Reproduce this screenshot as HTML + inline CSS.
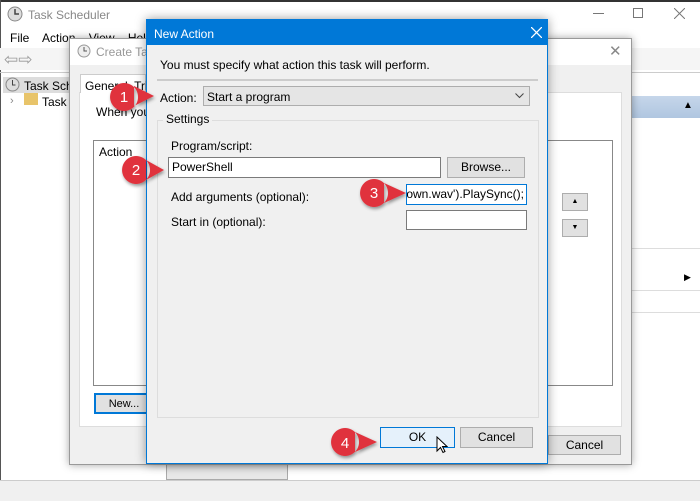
<!DOCTYPE html>
<html><head><meta charset="utf-8"><style>
*{box-sizing:border-box;margin:0;padding:0}
body{width:700px;height:501px;overflow:hidden;position:relative;background:#fff;font-family:"Liberation Sans",sans-serif;font-size:11px;color:#000}
.a{position:absolute}
.btn{position:absolute;background:#e1e1e1;border:1px solid #adadad;text-align:center;line-height:18px;font-size:11px}
.inp{position:absolute;background:#fff;border:1px solid #7a7a7a;font-size:11px;padding-left:3px;line-height:18px}
</style></head><body>
<!-- main window -->
<div class="a" style="left:0;top:0;width:700px;height:2px;background:#333"></div>
<div class="a" style="left:0;top:0;width:1px;height:501px;background:#555"></div>
<svg class="a" style="left:7px;top:6px" width="16" height="16"><circle cx="8" cy="8" r="7" fill="#ddd" stroke="#888"/><path d="M8 3v5h4" stroke="#444" fill="none" stroke-width="1.5"/></svg>
<div class="a" style="left:28px;top:8px;color:#888;font-size:12px">Task Scheduler</div>
<div class="a" style="left:593px;top:13px;width:11px;height:1px;background:#777"></div>
<div class="a" style="left:633px;top:8px;width:10px;height:10px;border:1px solid #777"></div>
<svg class="a" style="left:674px;top:8px" width="11" height="11"><path d="M0 0L11 11M11 0L0 11" stroke="#777"/></svg>
<div class="a" style="left:10px;top:31px;font-size:12px">File&nbsp;&nbsp;&nbsp; Action&nbsp;&nbsp;&nbsp; View&nbsp;&nbsp;&nbsp; Help</div>
<div class="a" style="left:0;top:48px;width:700px;height:22px;background:#f5f5f5"></div>
<div class="a" style="left:4px;top:50px;color:#999;font-size:17px">⇦⇨</div>
<div class="a" style="left:0;top:72px;width:700px;height:1px;background:#ccc"></div>
<div class="a" style="left:3px;top:77px;width:66px;height:16px;background:#ddd"></div>
<svg class="a" style="left:5px;top:77px" width="15" height="15"><circle cx="7.5" cy="7.5" r="6.5" fill="#ddd" stroke="#888"/><path d="M7.5 3v5h3" stroke="#444" fill="none"/></svg>
<div class="a" style="left:24px;top:79px;font-size:12px">Task Sche</div>
<div class="a" style="left:10px;top:95px;color:#888">›</div>
<div class="a" style="left:24px;top:93px;width:14px;height:12px;background:#e8c46a"></div>
<div class="a" style="left:42px;top:95px;font-size:12px">Task S</div>
<div class="a" style="left:632px;top:96px;width:68px;height:22px;background:linear-gradient(#c6d6ea,#b0c6e0)"></div>
<div class="a" style="left:683px;top:100px;font-size:10px">▲</div>
<div class="a" style="left:632px;top:248px;width:68px;height:1px;background:#ddd"></div>
<div class="a" style="left:632px;top:290px;width:68px;height:1px;background:#ddd"></div>
<div class="a" style="left:632px;top:312px;width:68px;height:1px;background:#ddd"></div>
<div class="a" style="left:684px;top:272px;font-size:9px">▶</div>
<div class="a" style="left:0;top:480px;width:700px;height:21px;background:#f0f0f0;border-top:1px solid #ccc"></div>
<div class="a" style="left:166px;top:462px;width:122px;height:18px;background:#e8e8e8;border:1px solid #aaa"></div>
<!-- Create Task dialog -->
<div class="a" style="left:69px;top:38px;width:563px;height:427px;background:#f0f0f0;border:1px solid #999;box-shadow:0 0 8px rgba(0,0,0,.35)"></div>
<div class="a" style="left:70px;top:39px;width:561px;height:26px;background:#fff"></div>
<svg class="a" style="left:77px;top:44px" width="14" height="14"><circle cx="7" cy="7" r="6" fill="#eee" stroke="#999"/><path d="M7 3v4h3" stroke="#555" fill="none"/></svg>
<div class="a" style="left:96px;top:45px;color:#999;font-size:12px">Create Task</div>
<div class="a" style="left:609px;top:42px;color:#888;font-size:15px">✕</div>
<div class="a" style="left:79px;top:92px;width:543px;height:335px;background:#fff;border:1px solid #ddd"></div>
<div class="a" style="left:80px;top:74px;width:66px;height:19px;background:#fff;border:1px solid #ccc;border-bottom:none"></div>
<div class="a" style="left:85px;top:79px;font-size:12px">General&nbsp; Trig</div>
<div class="a" style="left:96px;top:105px;font-size:12px">When you</div>
<div class="a" style="left:93px;top:140px;width:520px;height:246px;border:1px solid #888;background:#fff"></div>
<div class="a" style="left:99px;top:145px;font-size:12px">Action</div>
<div class="btn" style="left:94px;top:393px;width:60px;height:21px;border:2px solid #0078d7">New...</div>
<div class="btn" style="left:562px;top:193px;width:26px;height:18px;font-size:7px;line-height:16px">▲</div>
<div class="btn" style="left:562px;top:219px;width:26px;height:18px;font-size:7px;line-height:16px">▼</div>
<div class="btn" style="left:548px;top:435px;width:73px;height:20px;font-size:12px">Cancel</div>
<!-- New Action dialog -->
<div class="a" style="left:146px;top:19px;width:402px;height:445px;background:#f0f0f0;border:1px solid #0078d7;box-shadow:0 0 10px rgba(0,0,0,.4)"></div>
<div class="a" style="left:146px;top:19px;width:402px;height:26px;background:#0078d7"></div>
<div class="a" style="left:154px;top:27px;color:#fff;font-size:12px">New Action</div>
<svg class="a" style="left:531px;top:27px" width="11" height="11"><path d="M0 0L11 11M11 0L0 11" stroke="#fff" stroke-width="1.3"/></svg>
<div class="a" style="left:160px;top:58px;font-size:12px">You must specify what action this task will perform.</div>
<div class="a" style="left:157px;top:79px;width:381px;height:2px;background:#ccc"></div>
<div class="a" style="left:160px;top:91px;font-size:12px">Action:</div>
<div class="a" style="left:203px;top:86px;width:327px;height:20px;background:#e5e5e5;border:1px solid #adadad"></div>
<div class="a" style="left:207px;top:90px;font-size:12px">Start a program</div>
<svg class="a" style="left:515px;top:93px" width="9" height="6"><path d="M0.5 0.5L4.5 4.5L8.5 0.5" stroke="#444" fill="none"/></svg>
<div class="a" style="left:157px;top:120px;width:382px;height:298px;border:1px solid #ddd"></div>
<div class="a" style="left:163px;top:112px;background:#f0f0f0;padding:0 3px;font-size:12px">Settings</div>
<div class="a" style="left:171px;top:139px;font-size:12px">Program/script:</div>
<div class="inp" style="left:168px;top:157px;width:273px;height:21px;font-size:12px">PowerShell</div>
<div class="btn" style="left:447px;top:157px;width:78px;height:21px;font-size:12px">Browse...</div>
<div class="a" style="left:171px;top:190px;font-size:12px">Add arguments (optional):</div>
<div class="inp" style="left:406px;top:184px;width:121px;height:21px;border-color:#0078d7;font-size:12px;overflow:hidden;white-space:nowrap;padding:0 2px;direction:rtl;text-align:right"><span style="direction:ltr;unicode-bidi:bidi-override">ıtdown.wav').PlaySync();</span></div>
<div class="a" style="left:171px;top:215px;font-size:12px">Start in (optional):</div>
<div class="inp" style="left:406px;top:210px;width:121px;height:20px"></div>
<div class="btn" style="left:380px;top:427px;width:75px;height:21px;background:#e5f1fb;border-color:#0078d7;font-size:12px">OK</div>
<div class="btn" style="left:460px;top:427px;width:73px;height:21px;font-size:12px">Cancel</div>
<svg class="a" style="left:436px;top:436px" width="12" height="18"><path d="M1 1v14l3.5-3.5 2.5 5 2-1-2.5-5H11z" fill="#fff" stroke="#000"/></svg>
<!-- callouts -->
<svg class="a" style="left:0;top:0" width="700" height="501">
<defs><filter id="s"><feDropShadow dx="1" dy="2" stdDeviation="1.5" flood-opacity=".4"/></filter></defs>
<g filter="url(#s)" fill="#e0333d">
<path d="M124 83a14 14 0 1 0 0.1 0zM134 86L154 96L134 106z"/>
<path d="M136 156a14 14 0 1 0 0.1 0zM146 160L164 170L146 180z"/>
<path d="M374 179a14 14 0 1 0 0.1 0zM384 183L406 193L384 203z"/>
<path d="M345 428a14 14 0 1 0 0.1 0zM355 432L377 442L355 452z"/>
</g>
<g fill="#fff" font-family="Liberation Sans" font-size="15" text-anchor="middle">
<text x="124" y="102">1</text><text x="136" y="175">2</text><text x="374" y="198">3</text><text x="345" y="448">4</text>
</g>
</svg>
</body></html>
